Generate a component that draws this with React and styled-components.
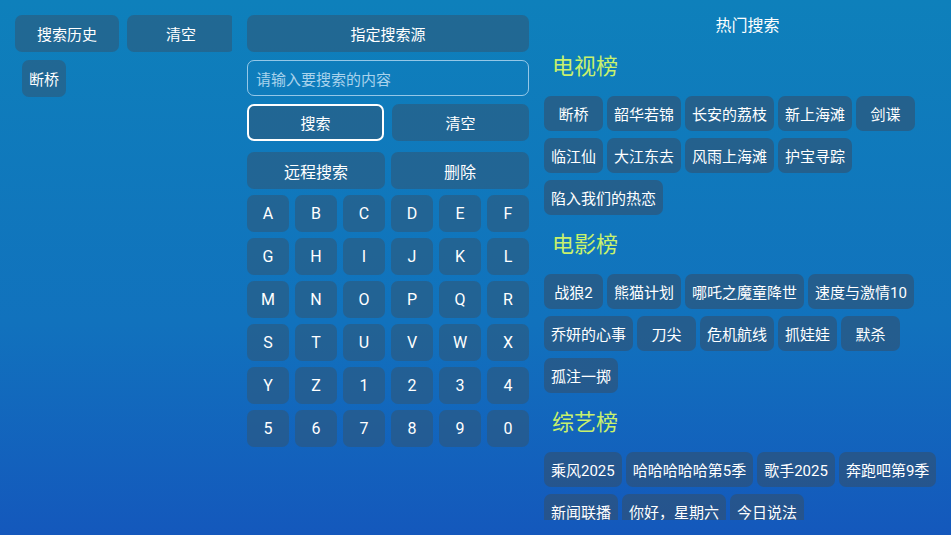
import React from "react";
import styled, { createGlobalStyle } from "styled-components";

const Global = createGlobalStyle`
  html, body { margin: 0; padding: 0; }
  body {
    width: 951px; height: 535px; overflow: hidden;
    font-family: Roboto, "Noto Sans CJK SC", sans-serif;
    background: linear-gradient(to bottom, #0e80bb 0%, #1172bd 60%, #1458bc 100%);
  }
  * { box-sizing: border-box; }
`;

const Page = styled.div`
  width: 951px;
  height: 535px;
  display: flex;
  align-items: flex-start;
  padding: 15px 0 0 15px;
  gap: 15px;
  color: #fff;
`;

const tile = `
  background: rgba(50, 85, 115, 0.55);
  border-radius: 7px;
  color: #fff;
  display: flex;
  align-items: center;
  justify-content: center;
  font-size: 15px;
  white-space: nowrap;
`;

const LeftCol = styled.div`
  width: 217px;
  overflow: hidden;
  flex-shrink: 0;
`;

const LeftBar = styled.div`
  display: grid;
  grid-template-columns: 104px 108px;
  column-gap: 8px;
  width: 230px;
`;

const Btn = styled.div`
  ${tile}
  height: 37px;
  font-size: ${(p) => p.$fs || 15}px;
  border: ${(p) => (p.$focus ? "2px solid #fff" : "none")};
`;

const HistoryItem = styled.div`
  ${tile}
  margin: 8px 0 0 7px;
  height: 37px;
  padding: 0 7px;
  display: inline-flex;
`;

const MidCol = styled.div`
  width: 282px;
  flex-shrink: 0;
`;

const SearchInput = styled.div`
  margin-top: 8px;
  height: 36px;
  border: 1.5px solid rgba(220, 240, 255, 0.65);
  border-radius: 7px;
  display: flex;
  align-items: center;
  padding-left: 8px;
  font-size: 15px;
  color: #a9d3ec;
`;

const BtnRow = styled.div`
  display: grid;
  grid-template-columns: 1fr 1fr;
  column-gap: ${(p) => p.$gap}px;
  margin-top: ${(p) => p.$mt}px;
`;

const Keys = styled.div`
  margin-top: 6px;
  display: grid;
  grid-template-columns: repeat(6, 42px);
  grid-auto-rows: 37px;
  gap: 6px;
`;

const Key = styled.div`
  ${tile}
  font-size: 16px;
`;

const RightCol = styled.div`
  width: 407px;
  height: 505px;
  overflow: hidden;
  flex-shrink: 0;
`;

const Title = styled.div`
  height: 22px;
  line-height: 22px;
  text-align: center;
  font-size: 16px;
`;

const Heading = styled.div`
  margin-top: 8px;
  height: 44px;
  line-height: 44px;
  padding-left: 8px;
  font-size: 22px;
  color: #c8f16c;
`;

const Tags = styled.div`
  margin-top: 7px;
  display: flex;
  flex-wrap: wrap;
  gap: 7px 4px;
`;

const Tag = styled.div`
  ${tile}
  height: 35px;
  min-width: 59px;
  padding: 0 7px;
  background: rgba(50, 80, 110, 0.6);
`;

const keys = "ABCDEFGHIJKLMNOPQRSTUVWXYZ1234567890".split("");

const sections = [
  {
    name: "电视榜",
    items: ["断桥", "韶华若锦", "长安的荔枝", "新上海滩", "剑谍", "临江仙", "大江东去", "风雨上海滩", "护宝寻踪", "陷入我们的热恋"],
  },
  {
    name: "电影榜",
    items: ["战狼2", "熊猫计划", "哪吒之魔童降世", "速度与激情10", "乔妍的心事", "刀尖", "危机航线", "抓娃娃", "默杀", "孤注一掷"],
  },
  {
    name: "综艺榜",
    items: ["乘风2025", "哈哈哈哈哈第5季", "歌手2025", "奔跑吧第9季", "新闻联播", "你好，星期六", "今日说法"],
  },
];

export default function App() {
  return (
    <>
      <Global />
      <Page>
        <LeftCol>
          <LeftBar>
            <Btn>搜索历史</Btn>
            <Btn>清空</Btn>
          </LeftBar>
          <HistoryItem>断桥</HistoryItem>
        </LeftCol>

        <MidCol>
          <Btn>指定搜索源</Btn>
          <SearchInput>请输入要搜索的内容</SearchInput>
          <BtnRow $gap={8} $mt={8}>
            <Btn $focus>搜索</Btn>
            <Btn>清空</Btn>
          </BtnRow>
          <BtnRow $gap={6} $mt={11}>
            <Btn $fs={16}>远程搜索</Btn>
            <Btn $fs={16}>删除</Btn>
          </BtnRow>
          <Keys>
            {keys.map((k) => (
              <Key key={k}>{k}</Key>
            ))}
          </Keys>
        </MidCol>

        <RightCol>
          <Title>热门搜索</Title>
          {sections.map((s) => (
            <React.Fragment key={s.name}>
              <Heading>{s.name}</Heading>
              <Tags>
                {s.items.map((t) => (
                  <Tag key={t}>{t}</Tag>
                ))}
              </Tags>
            </React.Fragment>
          ))}
        </RightCol>
      </Page>
    </>
  );
}
